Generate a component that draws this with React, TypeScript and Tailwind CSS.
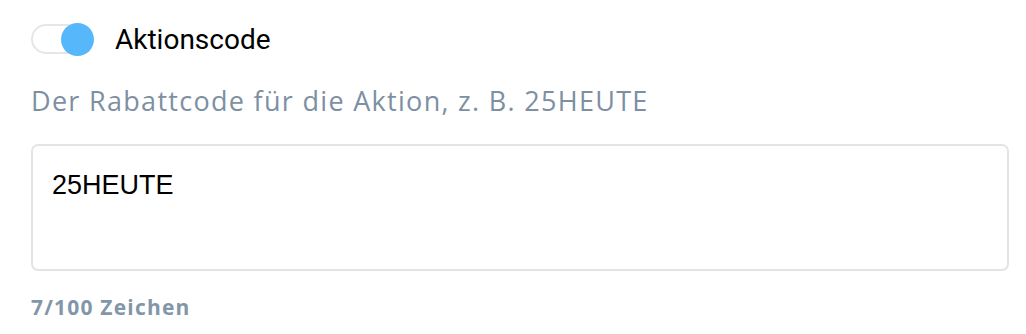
import { useState } from 'react';

export default function App() {
  const [enabled, setEnabled] = useState(true);
  const [code, setCode] = useState('25HEUTE');

  return (
    <div className="w-[1026px] h-[334px] bg-white pl-[31px] pr-[17px] pt-[23px]">
      {/* toggle + label */}
      <div className="flex items-center h-[33px]">
        <button
          type="button"
          onClick={() => setEnabled(!enabled)}
          className="relative w-[63px] h-[33px] shrink-0"
        >
          <span className="absolute left-0 top-[1px] w-[60px] h-[30px] rounded-full border-2 border-[#e6e6e6] bg-white" />
          <span
            className={`absolute top-0 w-[33px] h-[33px] rounded-full ${
              enabled ? 'left-[30px] bg-[#56b7fa]' : 'left-0 bg-[#cfd6dd]'
            }`}
          />
        </button>
        <span className="ml-[21px] text-[28px] text-black font-['Roboto',sans-serif]">Aktionscode</span>
      </div>

      <p className="mt-[27px] text-[27px] leading-[36px] tracking-[1.3px] text-[#7d8fa2] font-['Open_Sans',sans-serif]">
        Der Rabattcode für die Aktion, z. B. 25HEUTE
      </p>

      <textarea
        value={code}
        onChange={(e) => setCode(e.target.value)}
        maxLength={100}
        className="mt-[25px] block w-full h-[127px] resize-none rounded-[7px] border-2 border-[#e4e4e4] px-[19px] pt-[23px] text-[27px] leading-[32px] text-black outline-none font-['Liberation_Sans',Arial,sans-serif]"
      />

      <div className="mt-[21px] text-[21px] font-bold tracking-[1.2px] text-[#8396a9] font-['Open_Sans',sans-serif]">
        {code.length}/100 Zeichen
      </div>
    </div>
  );
}
